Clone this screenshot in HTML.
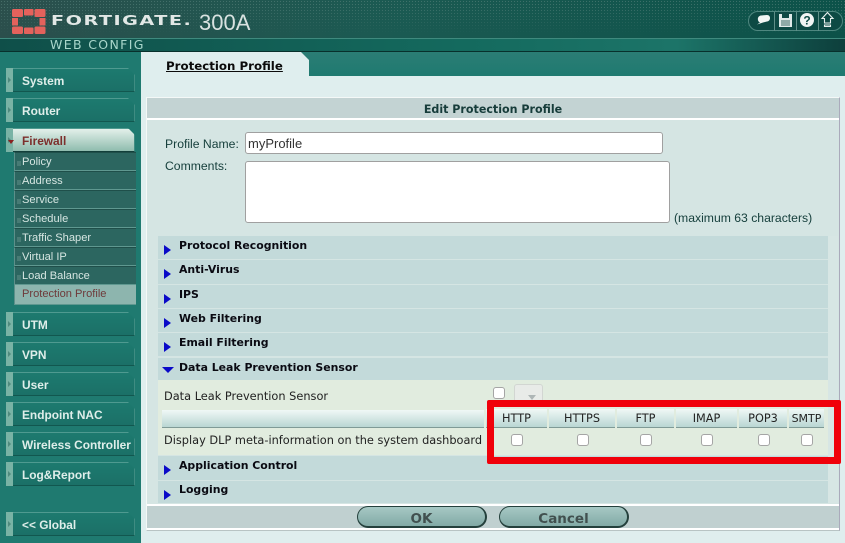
<!DOCTYPE html>
<html><head><meta charset="utf-8"><style>
html,body{margin:0;padding:0}
body{width:845px;height:543px;overflow:hidden;position:relative;background:#dfeeee;font-family:"Liberation Sans",sans-serif}
div,span,svg{position:absolute;box-sizing:border-box}
.t{white-space:nowrap}
.nav{left:6px;width:129px;height:24px;background:linear-gradient(#1d7a6f,#1b7067);border-top:1px solid #4f9a90;border-right:1px solid #3f8c82;border-bottom:1px solid #12574f;clip-path:polygon(0 0,122px 0,129px 7px,129px 24px,0 24px)}
.nav:before{content:"";position:absolute;left:0;top:-1px;width:7px;height:25px;background:#79b3a5}
.nav:after{content:"";position:absolute;left:2px;top:8px;width:0;height:0;border-left:3px solid #4f8a7e;border-top:3px solid transparent;border-bottom:3px solid transparent}
.nl{left:22px;font:bold 11.9px "Liberation Sans",sans-serif;color:#dfeeea;white-space:nowrap}
.sub{left:14px;width:122px;height:19px;background:#2c6660;border-left:1px solid #5c908a;border-bottom:1px solid #5f9890;border-top:1px solid #1f4f4a;color:#d6e6e2;font:11.1px/18px "Liberation Sans",sans-serif;padding-left:7px}
.sub:before{content:"";position:absolute;left:2px;top:8px;width:4px;height:5px;background-image:radial-gradient(#8fb5ae .6px,transparent .8px);background-size:2px 2px}
.sec{left:158px;width:670px;background:#c3dada}
.st{left:179px;font:bold 10.9px "DejaVu Sans",sans-serif;color:#0a0a12;white-space:nowrap}
.tri{left:164px;width:0;height:0;border-left:7px solid #0a0ac8;border-top:5.5px solid transparent;border-bottom:5.5px solid transparent}
.th{top:409px;height:19px;background:linear-gradient(#f0f8f6,#b9d6d3);border-bottom:1px solid #7f9a96;text-align:center;font:11.3px/20px "DejaVu Sans",sans-serif;color:#222;white-space:nowrap}
.cb{width:12px;height:12px;background:#fff;border:1px solid #a5a5a5;border-radius:3px}
.lab{font:12.2px "Liberation Sans",sans-serif;color:#17403d;white-space:nowrap}
.btn{top:506px;height:22px;border-radius:11px;border:1px solid #24403c;border-bottom:2px solid #24403c;border-right:2px solid #24403c;background:linear-gradient(#a6c8c4,#82aaa6);text-align:center;font:bold 13.5px/25px "DejaVu Sans",sans-serif;color:#41504f}
.ic{top:12px;width:1px;height:19px;background:#5f8f88}
</style></head><body>

<!-- header -->
<div style="left:0;top:0;width:845px;height:38px;background:linear-gradient(90deg,#2b4f4c,#1b5a52 45%,#0c5249 100%)"></div>
<div style="left:0;top:0;width:845px;height:38px;background-image:radial-gradient(#5d8680 .6px,transparent .8px);background-size:3px 3px;opacity:.55;-webkit-mask-image:linear-gradient(#000 0,#000 6px,rgba(0,0,0,.5) 22px,transparent 34px)"></div>
<div style="left:0;top:38px;width:845px;height:14px;background:linear-gradient(90deg,#0f4f49,#146a5e 55%,#1c7468 80%,#0d3f3c 100%);border-top:1px solid #3f8a7e;border-bottom:1px solid #08302c"></div>

<!-- logo -->
<svg style="left:11px;top:8px" width="36" height="27" viewBox="0 0 36 27" fill="#e4625c">
<rect x="1" y="1" width="11" height="8" rx="1.500"/><rect x="13" y="1" width="9.500" height="6.500" rx="1"/><rect x="23.500" y="1" width="11" height="8" rx="1.500"/>
<rect x="1" y="10" width="6" height="7.500"/><rect x="28.500" y="10" width="6" height="7.500"/>
<rect x="1" y="18.500" width="11" height="7.500" rx="1.500"/><rect x="13" y="19.500" width="9.500" height="6.500" rx="1"/><rect x="23.500" y="18.500" width="11" height="7.500" rx="1.500"/>
</svg>
<div class="t" style="left:51px;top:13px;font:bold 15.5px/18px 'DejaVu Sans',sans-serif;color:#e2e8e6;letter-spacing:1.2px;transform-origin:0 0;transform:scale(1.24,.86)">FORTIGATE.</div>
<div class="t" style="left:199px;top:11px;font:22px/24px 'Liberation Sans',sans-serif;color:#d8e2e0">300A</div>
<div class="t" style="left:50px;top:38px;font:12.5px/14px 'DejaVu Sans',sans-serif;color:#a9d6cb;letter-spacing:1.35px">WEB CONFIG</div>

<!-- toolbar -->
<div style="left:748px;top:11px;width:95px;height:20px;background:#0d4a44;border:1px solid #4f8880;border-radius:10px"></div>
<div class="ic" style="left:774px"></div><div class="ic" style="left:796px"></div><div class="ic" style="left:818px"></div>
<svg style="left:755px;top:11px" width="85" height="18" viewBox="0 0 85 18">
<path d="M2 13.500 L5 11.500 C2 10.500 2 5 6 4.500 L12 4 C16 4 16 10 12 10.500 L8 11.500Z" fill="#f2f6f5"/>
<path d="M24 3h13v13h-13z" fill="#dfeae8"/><path d="M27 3h7v4h-7z" fill="#0d4a44"/><path d="M26 10h9M26 12h9M26 14h9" stroke="#3f6a66" stroke-width="1"/>
<circle cx="52" cy="9" r="7" fill="#f0f4f3"/><text x="52" y="13.500" text-anchor="middle" font-family="Liberation Sans" font-weight="bold" font-size="12" fill="#0d4a44">?</text>
<path d="M72.500 1.500 L78 7.500 H75.500 V12 H69.500 V7.500 H67Z M69.500 14 H75.500 V15.500 H69.500Z" fill="none" stroke="#e8f0ee" stroke-width="1.100"/>
</svg>

<!-- sidebar -->
<div style="left:0;top:52px;width:141px;height:491px;background:#1f7a70"></div>
<div style="left:141px;top:52px;width:704px;height:24px;background:linear-gradient(#2b7d75,#1f7a70)"></div>
<div style="left:141px;top:52px;width:168px;height:24px;background:#dfeeee;clip-path:polygon(0 0,160px 0,168px 8px,168px 24px,0 24px)"></div>
<div class="t" style="left:166px;top:58px;font:bold 11.8px/16px 'DejaVu Sans',sans-serif;color:#0b0b0b;text-decoration:underline">Protection Profile</div>

<div class="nav" style="top:68px"></div><div class="nl" style="top:74px">System</div>
<div class="nav" style="top:98px"></div><div class="nl" style="top:104px">Router</div>
<div class="nav" style="top:128px;background:linear-gradient(#e3f0ea,#8fbcae);border-bottom:1px solid #123f3a"></div><div class="nl" style="top:134px;color:#7c2f2c">Firewall</div>
<div style="left:8px;top:140px;width:0;height:0;border-top:4px solid #8a2020;border-left:3px solid transparent;border-right:3px solid transparent"></div>
<div class="sub" style="top:152px">Policy</div>
<div class="sub" style="top:171px">Address</div>
<div class="sub" style="top:190px">Service</div>
<div class="sub" style="top:209px">Schedule</div>
<div class="sub" style="top:228px">Traffic Shaper</div>
<div class="sub" style="top:247px">Virtual IP</div>
<div class="sub" style="top:266px">Load Balance</div>
<div class="sub" style="top:285px;background:#8db5ae;color:#6e3a3a;border-top:0;height:20px">Protection Profile</div>
<div class="nav" style="top:312px"></div><div class="nl" style="top:318px">UTM</div>
<div class="nav" style="top:342px"></div><div class="nl" style="top:348px">VPN</div>
<div class="nav" style="top:372px"></div><div class="nl" style="top:378px">User</div>
<div class="nav" style="top:402px"></div><div class="nl" style="top:408px">Endpoint NAC</div>
<div class="nav" style="top:432px"></div><div class="nl" style="top:438px">Wireless Controller</div>
<div class="nav" style="top:462px"></div><div class="nl" style="top:468px">Log&amp;Report</div>
<div class="nav" style="top:512px"></div><div class="nl" style="top:518px">&lt;&lt; Global</div>

<!-- panel -->
<div style="left:146px;top:97px;width:694px;height:434px;background:#d5e5e3;border:1px solid #f4f8f7;border-right:1px solid #aab;border-bottom:1px solid #b8c4c4;outline:0"></div>
<div style="left:147px;top:98px;width:692px;height:22px;background:#c3d3d3;border-bottom:2px solid #fff"></div>
<div class="t" style="left:147px;width:692px;top:102px;text-align:center;font:bold 11.1px/15px 'DejaVu Sans',sans-serif;color:#163c3a">Edit Protection Profile</div>

<div class="lab" style="left:165px;top:137px">Profile Name:</div>
<div style="left:245px;top:132px;width:418px;height:22px;background:#fff;border:1px solid #a0a0a0;border-radius:3px"></div>
<div class="t" style="left:248px;top:136px;font:13px/16px 'Liberation Sans',sans-serif;color:#333">myProfile</div>
<div class="lab" style="left:165px;top:159px">Comments:</div>
<div style="left:245px;top:161px;width:425px;height:62px;background:#fff;border:1px solid #a0a0a0;border-radius:3px"></div>
<div class="lab" style="left:674px;top:211px">(maximum 63 characters)</div>

<!-- sections -->
<div class="sec" style="top:236px;height:23px"></div><div class="tri" style="top:245px"></div><div class="st" style="top:239px">Protocol Recognition</div>
<div class="sec" style="top:260px;height:24px"></div><div class="tri" style="top:269px"></div><div class="st" style="top:263px">Anti-Virus</div>
<div class="sec" style="top:285px;height:23px"></div><div class="tri" style="top:294px"></div><div class="st" style="top:288px">IPS</div>
<div class="sec" style="top:309px;height:23px"></div><div class="tri" style="top:318px"></div><div class="st" style="top:312px">Web Filtering</div>
<div class="sec" style="top:333px;height:23px"></div><div class="tri" style="top:342px"></div><div class="st" style="top:336px">Email Filtering</div>
<div class="sec" style="top:358px;height:22px"></div>
<div style="left:162px;top:367px;width:0;height:0;border-top:6px solid #0a0ac8;border-left:6px solid transparent;border-right:6px solid transparent"></div>
<div class="st" style="top:361px">Data Leak Prevention Sensor</div>

<div style="left:158px;top:380px;width:670px;height:75px;background:#e1ecdf"></div>
<div class="t" style="left:164px;top:389px;font:11.35px/15px 'DejaVu Sans',sans-serif;color:#222">Data Leak Prevention Sensor</div>
<div class="cb" style="left:493px;top:387px"></div>
<div style="left:514px;top:384px;width:29px;height:22px;background:#e8ebe8;border:1px solid #d2d6d2;border-radius:3px"></div>
<div style="left:528px;top:395px;width:0;height:0;border-top:5px solid #aeb6b6;border-left:4px solid transparent;border-right:4px solid transparent"></div>
<div style="left:162px;top:410px;width:322px;height:18px;background:linear-gradient(#f0f8f6,#b9d6d3);border-bottom:1px solid #7f9a96"></div>
<div class="t" style="left:164px;top:433px;font:11.35px/15px 'DejaVu Sans',sans-serif;color:#222">Display DLP meta-information on the system dashboard</div>

<div class="th" style="left:486px;width:61px">HTTP</div>
<div class="th" style="left:549px;width:66px">HTTPS</div>
<div class="th" style="left:617px;width:57px">FTP</div>
<div class="th" style="left:676px;width:61px">IMAP</div>
<div class="th" style="left:739px;width:48px">POP3</div>
<div class="th" style="left:789px;width:35px;font-size:11px">SMTP</div>
<div class="cb" style="left:511px;top:434px"></div>
<div class="cb" style="left:577px;top:434px"></div>
<div class="cb" style="left:640px;top:434px"></div>
<div class="cb" style="left:701px;top:434px"></div>
<div class="cb" style="left:758px;top:434px"></div>
<div class="cb" style="left:801px;top:434px"></div>

<div class="sec" style="top:456px;height:24px"></div><div class="tri" style="top:465px"></div><div class="st" style="top:459px">Application Control</div>
<div class="sec" style="top:481px;height:22px"></div><div class="tri" style="top:490px"></div><div class="st" style="top:483px">Logging</div>
<div style="left:828px;top:236px;width:10px;height:267px;background:#d7e6e4"></div>

<div style="left:487px;top:400px;width:354px;height:64px;border:7px solid #f0000a;border-radius:2px"></div>

<!-- footer -->
<div style="left:147px;top:504px;width:692px;height:26px;background:#c0d0d0;border-top:2px solid #fff;border-bottom:2px solid #fff"></div>
<div class="btn" style="left:357px;width:130px">OK</div>
<div class="btn" style="left:499px;width:130px">Cancel</div>
</body></html>
